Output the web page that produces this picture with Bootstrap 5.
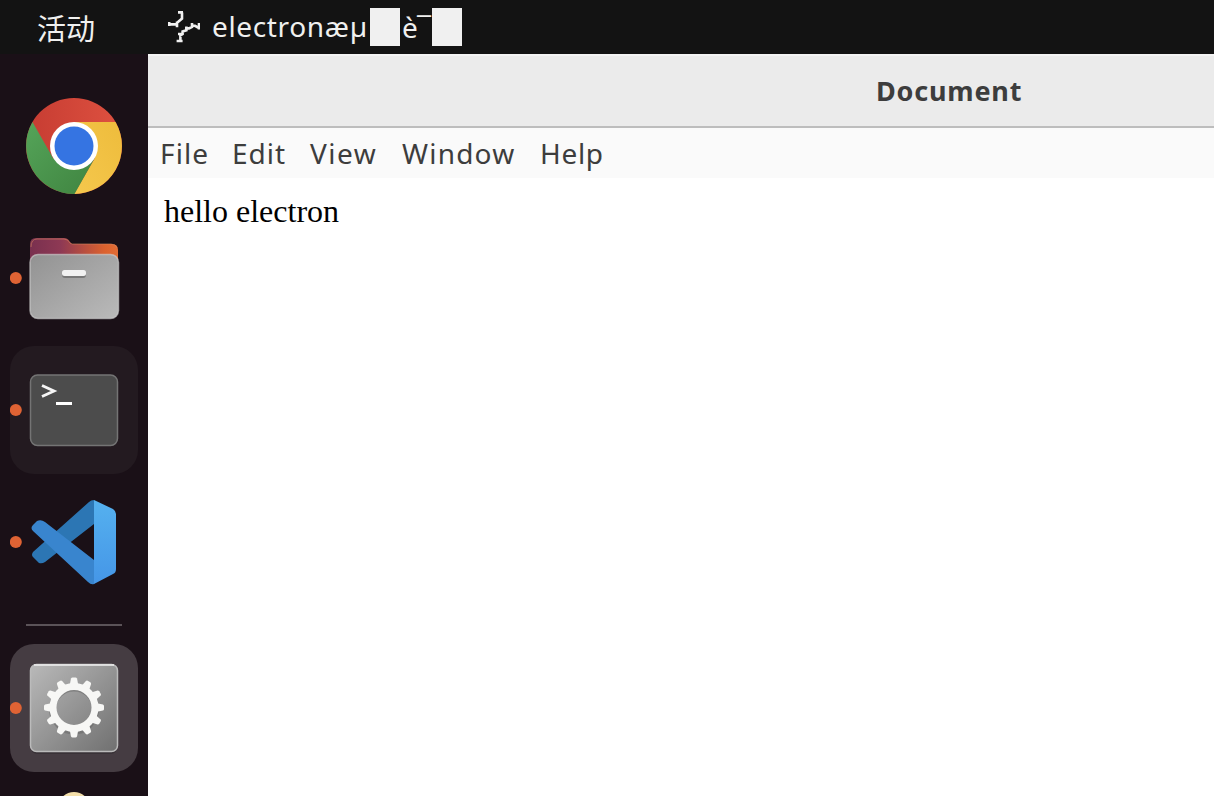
<!DOCTYPE html>
<html lang="zh">
<head>
<meta charset="utf-8">
<meta name="viewport" content="width=device-width, initial-scale=1">
<title>Document</title>
<link href="https://cdn.jsdelivr.net/npm/bootstrap@5.3.0/dist/css/bootstrap.min.css" rel="stylesheet">
<style>
body{background:#1a1017;font-family:"Noto Sans","Noto Sans CJK SC",sans-serif;font-size:28px;line-height:36px}
.topbar{height:54px;background:#131313;color:#f0f0ef;padding-left:37px}
.activities{width:131px;font-family:"Noto Sans CJK SC",sans-serif;font-weight:400;font-size:29px;padding-bottom:1px}
.appname{width:158px;margin-left:12px;letter-spacing:.65px;padding-bottom:2px}
.appname-end{width:32px;padding-left:2px;letter-spacing:-.8px}
.tofu{width:30px;height:38px;background:#f0f0f0}
.dock{width:148px;background:#1a1017}
.tile{width:128px;height:128px;margin-left:10px;border-radius:24px}
.tile svg{width:128px;height:128px;display:block}
.tile.cut,.tile.cut svg{height:20px}
.hovered{background:#231a20}
.focused{background:#453c42}
.divider{width:96px;height:2px;background:#5b5358;margin:18px 0 18px 26px}
.titlebar{height:74px;background:#ebebeb;border-top:2px solid #f4f4f4;border-bottom:2px solid #bdbdbd;color:#3d3d3d}
.titlebar h1{font-size:27px;letter-spacing:.8px;padding-left:728px}
.menus{height:50px;background:#fafafa;color:#3d3d3d;padding:0 0 1px 12px}
.content{font-family:"Liberation Serif",serif;font-size:32px;line-height:36px;color:#000;padding:15px 16px}
</style>
</head>
<body class="vh-100 overflow-hidden d-flex flex-column">
<header class="topbar d-flex align-items-center flex-shrink-0">
  <div class="activities">活动</div>
  <svg width="32" height="32" viewBox="0 0 16 16" fill="none" stroke="#f0f0f0" stroke-width="1.300"><path d="M5 .7h2.500M7 .7v3.100L5.300 5.200L4.500 6M0 6.700h4.500M.6 5.500v2M4.500 5.300v2.800M15.500 6v3.300M15.500 8.500L13.500 7.400H12M12 6v2L10.500 8.700H8.500M9.200 7.800v1.800L7.300 10.200V11.500L5.800 12.500M5 11.500h2.500M6.200 12v3M4.300 15h3"/></svg>
  <span class="appname">electronæµ</span><span class="tofu"></span><span class="appname-end">è¯</span><span class="tofu"></span>
</header>
<div class="d-flex flex-grow-1" style="min-height:0">
<nav class="dock d-flex flex-column flex-shrink-0 pt-4 overflow-hidden">
  <svg width="0" height="0" class="position-absolute"><defs>
    <linearGradient id="red" x2="1"><stop stop-color="#c63c32"/><stop offset="1" stop-color="#de5140"/></linearGradient>
    <linearGradient id="green" x1="0" y1="0" x2="1" y2="1"><stop stop-color="#55a459"/><stop offset="1" stop-color="#3f8440"/></linearGradient>
    <linearGradient id="yellow" x1="1" y1="0" x2="0" y2="1"><stop stop-color="#eebc3c"/><stop offset="1" stop-color="#f5c84d"/></linearGradient>
    <linearGradient id="folder"><stop stop-color="#79304f"/><stop offset=".35" stop-color="#8e3954"/><stop offset=".85" stop-color="#dc622e"/><stop offset="1" stop-color="#e26c34"/></linearGradient>
    <linearGradient id="panel" x2="1" y2="1"><stop stop-color="#929292"/><stop offset="1" stop-color="#bababa"/></linearGradient>
    <linearGradient id="metal" x2="1" y2="1"><stop stop-color="#b9b9b9"/><stop offset="1" stop-color="#707070"/></linearGradient>
    <linearGradient id="blue" x2="0" y2="1"><stop stop-color="#55b1ef"/><stop offset="1" stop-color="#4596e7"/></linearGradient>
  </defs></svg>
  <div class="tile mt-1"><svg viewBox="10 82 128 128">
    <circle cx="74" cy="146" r="48" fill="url(#red)"/>
    <path d="M74 122h41.500A48 48 0 0 1 74 194L95 158z" fill="url(#yellow)"/>
    <path d="M32.500 122L53 158L74 170L94.800 158L74.500 194A48 48 0 0 1 32.500 122" fill="url(#green)"/>
    <circle cx="74" cy="146" r="24" fill="#fff"/><circle cx="74" cy="146" r="19.500" fill="#3574e2"/></svg></div>
  <div class="tile mt-1"><svg viewBox="10 214 128 128">
    <path d="M30 264V244q0-6 6-6H64q4 0 6 4l2 2h40q6 0 6 6v18z" fill="url(#folder)"/>
    <path d="M31 247q0-8 6-8H64q4 0 6 4l2 1h39q5 0 6 4" fill="none" stroke="#d5865e" stroke-opacity=".6"/>
    <rect x="30" y="254.500" width="88.500" height="64" rx="8" fill="url(#panel)" stroke="#ccc" stroke-opacity=".65" stroke-width="1.500"/>
    <rect x="62" y="272" width="24" height="6" rx="3" fill="#777"/><rect x="62" y="270" width="24" height="6" rx="2.500" fill="#f1f1f1"/>
    <circle cx="15.800" cy="278" r="6" fill="#df6334"/></svg></div>
  <div class="tile hovered mt-1"><svg viewBox="10 346 128 128">
    <rect x="30.500" y="375" width="87" height="70.500" rx="7" fill="#4c4c4c" stroke="#747474" stroke-width="1.500"/>
    <path d="M42 385.500l12 5.500L42 396.500" fill="none" stroke="#f6f6f6" stroke-width="2.800"/><path d="M56 403.500h16" stroke="#fff" stroke-width="3"/>
    <circle cx="15.800" cy="410" r="6" fill="#df6334"/></svg></div>
  <div class="tile mt-1"><svg viewBox="10 478 128 128">
    <path d="M94 500v24L45 562q-3 2-6 1l-6-6q-2-2 0-5L89 502q2-2 5-2" fill="#2c76b4"/>
    <path d="M94 584v-24L45 522q-4-3-8-1l-4 4q-3 3 0 6L88 582q3 3 6 2" fill="#3985ce"/>
    <path d="M94 500l19 9q3 2 3 5v55q0 4-3 5l-19 10z" fill="url(#blue)"/>
    <circle cx="15.800" cy="542" r="6" fill="#df6334"/></svg></div>
  <div class="divider flex-shrink-0"></div>
  <div class="tile focused flex-shrink-0"><svg viewBox="10 644 128 128">
    <rect x="31" y="667" width="86" height="87" rx="6" fill="#292227" opacity=".4"/>
    <rect x="30.500" y="664.500" width="87" height="87" rx="6" fill="url(#metal)" stroke="#bbb" stroke-width="1.500"/><path d="M34 665h80" stroke="#eee" stroke-width="1.500"/>
    <circle cx="74" cy="709.500" r="21.500" fill="none" stroke="#666" stroke-width="7" opacity=".5"/>
    <circle cx="74" cy="707.500" r="21" fill="none" stroke="#f7f7f5" stroke-width="7"/>
    <g id="teeth" fill="#f7f7f5"></g>
    <circle cx="15.800" cy="708" r="6" fill="#df6334"/></svg></div>
  <div class="tile cut flex-shrink-0 mt-1"><svg viewBox="10 776 128 20"><circle cx="74" cy="808" r="16" fill="#f4dfaa"/></svg></div>
</nav>
<main class="flex-grow-1 bg-white overflow-hidden">
  <div class="titlebar d-flex align-items-center"><h1 class="fw-bold m-0">Document</h1></div>
  <div class="menus d-flex align-items-center"><span style="width:72px;letter-spacing:1.1px">File</span><span style="width:78px;letter-spacing:1px">Edit</span><span style="width:92px;letter-spacing:1.5px">View</span><span style="width:138px;letter-spacing:1.2px">Window</span><span style="letter-spacing:.7px">Help</span></div>
  <div class="content">hello electron</div>
</main>
</div>
<script>
document.getElementById("teeth").innerHTML=Array.from({length:12},(_,i)=>`<path d="M69.500 686L71 678.500q.5-1 1.500-1h3q1 0 1.500 1L78.500 686z" transform="rotate(${i*30} 74 707.500)"/>`).join("");
</script>
<script src="https://cdn.jsdelivr.net/npm/bootstrap@5.3.0/dist/js/bootstrap.bundle.min.js"></script>
</body>
</html>
